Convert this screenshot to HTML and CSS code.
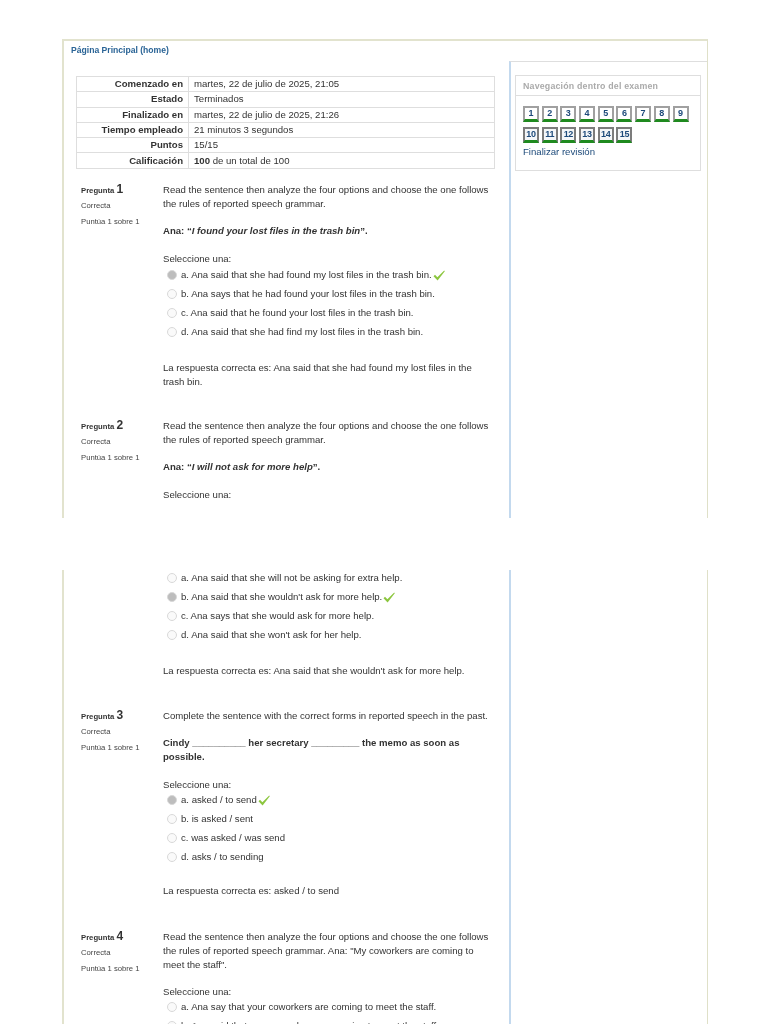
FILE: index.html
```html
<!doctype html>

<html lang="es">

<head>
  <meta charset="utf-8">
  <title>Revisión del examen</title>
  <link rel="stylesheet" href="styles.css">
</head>

<body>
  <div class="doc">

    <div class="sheet sheet-first">
      <div class="main">
        <a class="home-link" href="#">Página Principal (home)</a>
        <table class="summary">
          <tr><th>Comenzado en</th><td>martes, 22 de julio de 2025, 21:05</td></tr>
          <tr><th>Estado</th><td>Terminados</td></tr>
          <tr><th>Finalizado en</th><td>martes, 22 de julio de 2025, 21:26</td></tr>
          <tr><th>Tiempo empleado</th><td>21 minutos 3 segundos</td></tr>
          <tr><th>Puntos</th><td>15/15</td></tr>
          <tr><th>Calificación</th><td><b>100</b> de un total de 100</td></tr>
        </table>

        <div class="question q1">
          <div class="info">
            <div class="q-no">Pregunta <span>1</span></div>
            <div class="q-state">Correcta</div>
            <div class="q-grade">Puntúa 1 sobre 1</div>
          </div>
          <div class="content">
            <p>Read the sentence then analyze the four options and choose the one follows the rules of reported speech grammar.</p>
            <p class="quote"><b>Ana: “<i>I found your lost files in the trash bin</i>”.</b></p>
            <p class="prompt">Seleccione una:</p>
            <div class="option"><span class="radio checked"></span>a. Ana said that she had found my lost files in the trash bin.
              <svg class="tick" viewBox="0 0 12 11"><path d="M0.5 6.2 L2 4.8 L4.4 7.2 L11.2 0.6 L11.8 1.2 L4.6 10.6 Z" /></svg></div>
            <div class="option"><span class="radio"></span>b. Ana says that he had found your lost files in the trash bin.</div>
            <div class="option"><span class="radio"></span>c. Ana said that he found your lost files in the trash bin.</div>
            <div class="option"><span class="radio"></span>d. Ana said that she had find my lost files in the trash bin.</div>
            <p class="answer">La respuesta correcta es: Ana said that she had found my lost files in the trash bin.</p>
          </div>
        </div>

        <div class="question q2">
          <div class="info">
            <div class="q-no">Pregunta <span>2</span></div>
            <div class="q-state">Correcta</div>
            <div class="q-grade">Puntúa 1 sobre 1</div>
          </div>
          <div class="content">
            <p>Read the sentence then analyze the four options and choose the one follows the rules of reported speech grammar.</p>
            <p class="quote"><b>Ana: “<i>I will not ask for more help</i>”.</b></p>
            <p class="prompt">Seleccione una:</p>
          </div>
        </div>
      </div>

      <div class="side">
        <div class="nav-block">
          <div class="nav-title">Navegación dentro del examen</div>
          <div class="nav-body">
            <div class="nav-buttons">
              <a class="nav-btn" href="#">1</a>
              <a class="nav-btn" href="#">2</a>
              <a class="nav-btn" href="#">3</a>
              <a class="nav-btn" href="#">4</a>
              <a class="nav-btn" href="#">5</a>
              <a class="nav-btn" href="#">6</a>
              <a class="nav-btn" href="#">7</a>
              <a class="nav-btn" href="#">8</a>
              <a class="nav-btn" href="#">9</a>
              <a class="nav-btn nav-btn-dark" href="#">10</a>
              <a class="nav-btn nav-btn-dark" href="#">11</a>
              <a class="nav-btn nav-btn-dark" href="#">12</a>
              <a class="nav-btn nav-btn-dark" href="#">13</a>
              <a class="nav-btn nav-btn-dark" href="#">14</a>
              <a class="nav-btn nav-btn-dark" href="#">15</a>
            </div>
            <a class="finish-link" href="#">Finalizar revisión</a>
          </div>
        </div>
      </div>
    </div>

    <div class="sheet sheet-second">
      <div class="main">
        <div class="question q2-rest">
          <div class="info"></div>
          <div class="content">
            <div class="option"><span class="radio"></span>a. Ana said that she will not be asking for extra help.</div>
            <div class="option"><span class="radio checked"></span>b. Ana said that she wouldn't ask for more help.
              <svg class="tick" viewBox="0 0 12 11"><path d="M0.5 6.2 L2 4.8 L4.4 7.2 L11.2 0.6 L11.8 1.2 L4.6 10.6 Z" /></svg></div>
            <div class="option"><span class="radio"></span>c. Ana says that she would ask for more help.</div>
            <div class="option"><span class="radio"></span>d. Ana said that she won't ask for her help.</div>
            <p class="answer">La respuesta correcta es: Ana said that she wouldn't ask for more help.</p>
          </div>
        </div>

        <div class="question q3">
          <div class="info">
            <div class="q-no">Pregunta <span>3</span></div>
            <div class="q-state">Correcta</div>
            <div class="q-grade">Puntúa 1 sobre 1</div>
          </div>
          <div class="content">
            <p>Complete the sentence with the correct forms in reported speech in the past.</p>
            <p class="quote"><b>Cindy __________ her secretary _________ the memo as soon as possible.</b></p>
            <p class="prompt">Seleccione una:</p>
            <div class="option"><span class="radio checked"></span>a. asked / to send
              <svg class="tick" viewBox="0 0 12 11"><path d="M0.5 6.2 L2 4.8 L4.4 7.2 L11.2 0.6 L11.8 1.2 L4.6 10.6 Z" /></svg></div>
            <div class="option"><span class="radio"></span>b. is asked / sent</div>
            <div class="option"><span class="radio"></span>c. was asked / was send</div>
            <div class="option"><span class="radio"></span>d. asks / to sending</div>
            <p class="answer">La respuesta correcta es: asked / to send</p>
          </div>
        </div>

        <div class="question q4">
          <div class="info">
            <div class="q-no">Pregunta <span>4</span></div>
            <div class="q-state">Correcta</div>
            <div class="q-grade">Puntúa 1 sobre 1</div>
          </div>
          <div class="content">
            <p>Read the sentence then analyze the four options and choose the one follows the rules of reported speech grammar. Ana: "My coworkers are coming to meet the staff".</p>
            <p class="prompt">Seleccione una:</p>
            <div class="option"><span class="radio"></span>a. Ana say that your coworkers are coming to meet the staff.</div>
            <div class="option"><span class="radio"></span>b. Ana said that your coworkers are coming to meet the staff.</div>
          </div>
        </div>
      </div>

      <div class="side"></div>
    </div>

  </div>
</body>

</html>
```

FILE: styles.css
```css
html,
body {
  margin: 0;
  padding: 0;
  background: #fff;
}

.doc {
  height: 1024px;
  overflow: hidden;
  padding-top: 39px;
  box-sizing: border-box;
  font-family: "Liberation Sans", Arial, sans-serif;
  font-size: 9.6px;
  line-height: 14px;
  color: #333;
  filter: blur(0.35px);
}

.sheet {
  display: flex;
  width: 646px;
  margin-left: 62px;
  box-sizing: border-box;
  overflow: hidden;
  border-left: 2px solid #e2e3ce;
  border-right: 1px solid #dfe0c8;
}

.sheet-first {
  height: 479px;
  border-top: 2px solid #e2e3ce;
}

.sheet-second {
  height: 460px;
  margin-top: 52px;
}

.main {
  width: 445px;
  flex: none;
}

.side {
  flex: 1;
  border-left: 2px solid #c3d9ee;
}

.sheet-first .side {
  margin-top: 20px;
  border-top: 1px solid #dedede;
  padding: 13px 6px 0 4px;
}

.home-link {
  display: block;
  margin: 2px 0 0 7px;
  font-size: 8.6px;
  font-weight: bold;
  color: #2a6496;
  text-decoration: none;
}

/* attempt summary */
.summary {
  width: 419px;
  margin: 19px 0 0 12px;
  border-collapse: collapse;
  border: 1px solid #dedede;
}

.summary th,
.summary td {
  height: 15.3px;
  padding: 0 5px 1px;
  border: 1px solid #dedede;
  box-sizing: border-box;
  line-height: 13px;
  white-space: nowrap;
}

.summary th {
  width: 112px;
  text-align: right;
}

.summary td {
  text-align: left;
  font-weight: normal;
}

/* questions */
.question {
  display: grid;
  grid-template-columns: 82px 329px;
  margin-left: 17px;
}

.q1 {
  margin-top: 14px;
}

.q2 {
  margin-top: 30px;
}

.q2-rest {
  margin-top: -1.5px;
}

.q3 {
  margin-top: 31px;
}

.q4 {
  margin-top: 32px;
}

.info {
  margin-top: -1px;
  font-size: 7.7px;
  color: #444;
}

.q-no {
  font-weight: bold;
  color: #333;
}

.q-no span {
  font-size: 12px;
}

.q-state {
  margin-top: 1px;
}

.q-grade {
  margin-top: 2px;
}

.content p {
  margin: 0;
}

.content .quote {
  margin-top: 13px;
}

.content .prompt {
  margin-top: 14px;
}

.sheet-second .prompt {
  margin-bottom: -1px;
}

.q4 .prompt {
  margin-top: 13px;
}

.option {
  display: flex;
  align-items: center;
  gap: 4px;
  height: 19px;
  padding-left: 4px;
}

.radio {
  flex: none;
  width: 8px;
  height: 8px;
  border: 1px solid #d8d8d8;
  border-radius: 50%;
  background: #fafafa;
}

.radio.checked {
  background: #bdbdbd;
}

.tick {
  flex: none;
  width: 12px;
  height: 11px;
  margin-left: -3px;
}

.tick path {
  fill: #8cc63f;
}

.content .answer {
  margin-top: 19px;
}

.q3 .content .answer {
  margin-top: 17px;
}

/* quiz navigation */
.nav-block {
  border: 1px solid #dedede;
  height: 96px;
  box-sizing: border-box;
}

.nav-title {
  padding: 3px 7px 0;
  height: 20px;
  box-sizing: border-box;
  border-bottom: 1px solid #dedede;
  font-weight: bold;
  font-size: 8.8px;
  letter-spacing: 0.2px;
  color: #aaa;
}

.nav-body {
  padding: 10px 6px 0 7px;
}

.nav-buttons {
  display: flex;
  flex-wrap: wrap;
  gap: 5px 2.7px;
}

.nav-btn {
  width: 16px;
  height: 16px;
  box-sizing: border-box;
  border: 2px solid #a0a0a0;
  border-bottom: 3px solid #1f8a1f;
  text-align: center;
  font-weight: bold;
  font-size: 9px;
  line-height: 11px;
  color: #1d4a7a;
  text-decoration: none;
}

.nav-btn-dark {
  border-color: #7c7c7c;
  border-bottom-color: #1f8a1f;
  background: #f4f6f8;
  letter-spacing: -0.3px;
}

.finish-link {
  display: block;
  margin-top: 2px;
  color: #1d4a7a;
  text-decoration: none;
}
```
